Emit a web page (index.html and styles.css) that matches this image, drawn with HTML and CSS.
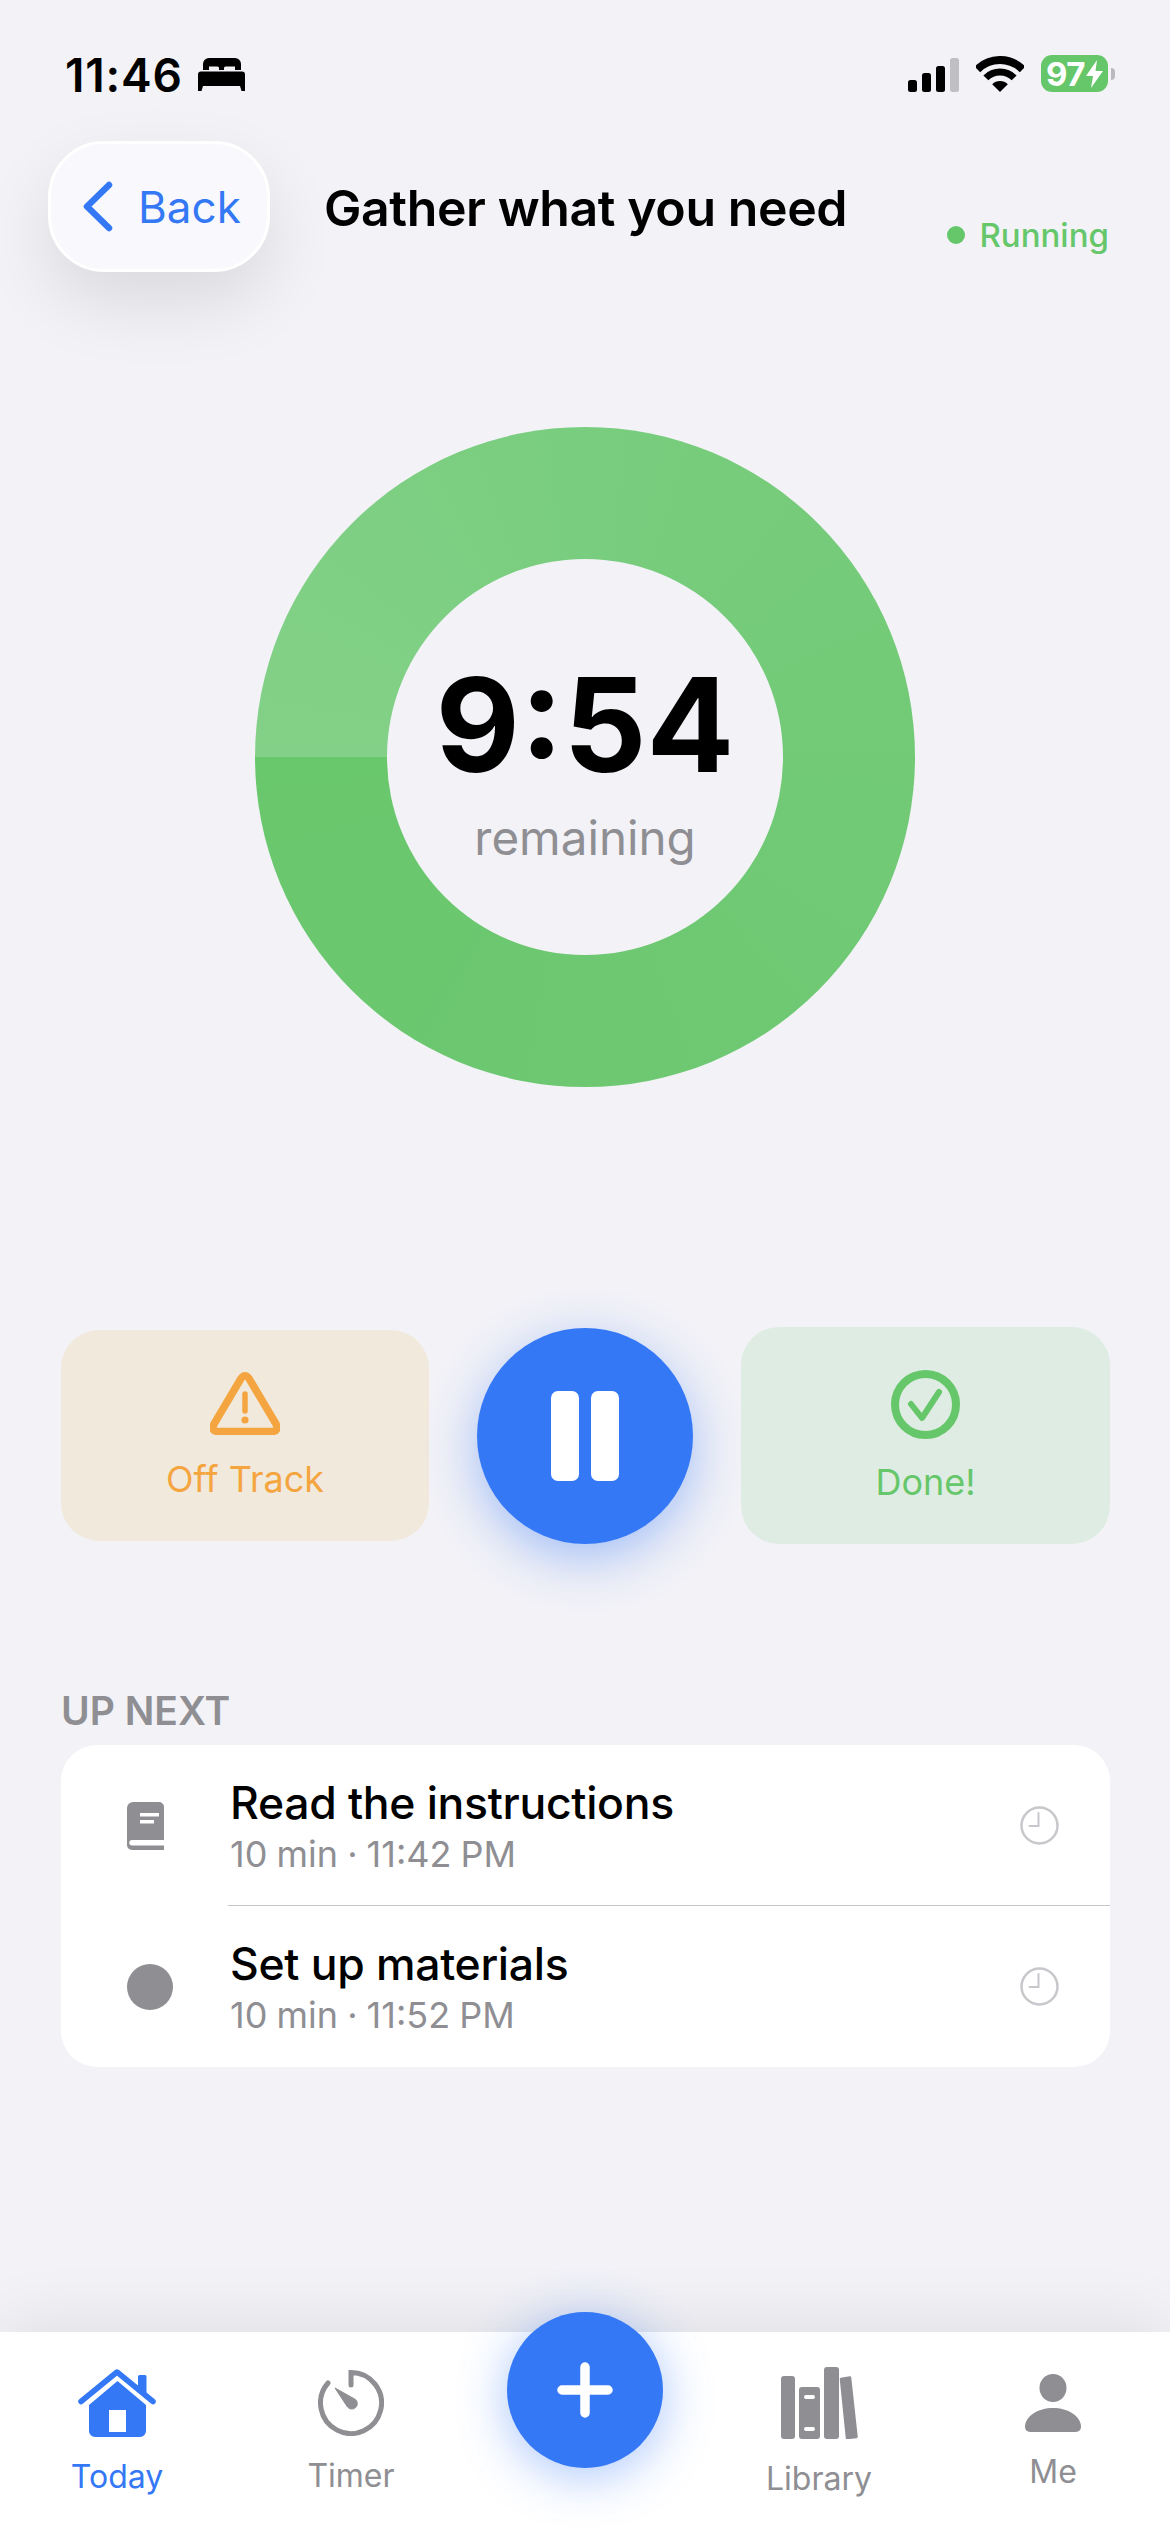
FILE: index.html
```html
<!DOCTYPE html>
<html lang="en">
<head>
  <meta charset="UTF-8">
  <title>Gather what you need</title>
  <link rel="stylesheet" href="styles.css">
</head>
<body>
  <div class="app">
    <div class="statusbar">
      <div class="clock-group">
        <span class="status-time">11:46</span>
        <svg class="bed" width="47" height="33" viewBox="0 0 47 33">
          <path fill-rule="evenodd" d="M11 0H37a6 6 0 0 1 6 6V12H5V6a6 6 0 0 1 6-6ZM11 8.500V12H21V10a1.500 1.500 0 0 0-1.500-1.500ZM27.500 8.500a1.500 1.500 0 0 0-1.500 1.500V12H37V8.500Z"/>
          <path d="M3 13.500H44a3 3 0 0 1 3 3V33H43.500L42 28H5L3.500 33H0V16.500a3 3 0 0 1 3-3Z"/>
        </svg>
      </div>
      <div class="status-icons">
        <svg width="51" height="34" viewBox="0 0 51 34">
          <rect x="0" y="22" width="9" height="12" rx="2.500"/>
          <rect x="14" y="15" width="9" height="19" rx="2.500"/>
          <rect x="28" y="8" width="9" height="26" rx="2.500"/>
          <rect x="42" y="0" width="9" height="34" rx="2.500" fill="#bfbfc4"/>
        </svg>
        <svg class="wifi" width="48" height="36" viewBox="0 0 48 36">
          <path d="M1.370 13.370A32 32 0 0 1 46.630 13.370" fill="none" stroke="#000" stroke-width="8"/>
          <path d="M9.860 21.860A20 20 0 0 1 38.140 21.860" fill="none" stroke="#000" stroke-width="7"/>
          <path d="M24 36L16.200 28.200A11 11 0 0 1 31.800 28.200Z"/>
        </svg>
        <div class="battery">
          <div class="battery-body">
            <span>97</span>
            <svg width="17" height="28" viewBox="0 0 17 28"><path d="M11 0L0 16H7L5 28L17 11H9.500Z" fill="#fff"/></svg>
          </div>
          <div class="battery-nub"></div>
        </div>
      </div>
    </div>

    <header class="topbar">
      <button class="back-btn">
        <svg width="30" height="51" viewBox="0 0 30 51"><path d="M26 4L4 25.500L26 47" fill="none" stroke="#3478f6" stroke-width="6.500" stroke-linecap="round" stroke-linejoin="round"/></svg>
        <span>Back</span>
      </button>
      <h1 class="title">Gather what you need</h1>
      <div class="run-state"><span class="run-dot"></span>Running</div>
    </header>

    <div class="ring">
      <div class="ring-hole">
        <div class="time-left">9:54</div>
        <div class="time-label">remaining</div>
      </div>
    </div>

    <div class="actions">
      <button class="action action-warn">
        <svg width="70" height="63" viewBox="0 0 70 63">
          <path d="M31 6.500Q35 1 39 6.500L66 52Q69 59.500 62 59.500H8Q1 59.500 4 52Z" fill="none" stroke="#f4a53f" stroke-width="7.500" stroke-linejoin="round"/>
          <path d="M35 22V39" stroke="#f4a53f" stroke-width="5.500" stroke-linecap="round"/>
          <circle cx="35" cy="48" r="3.600" fill="#f4a53f"/>
        </svg>
        <span>Off Track</span>
      </button>
      <button class="pause-btn">
        <span class="pause-bar"></span>
        <span class="pause-bar"></span>
      </button>
      <button class="action action-done">
        <svg width="69" height="69" viewBox="0 0 69 69">
          <circle cx="34.500" cy="34.500" r="30.500" fill="none" stroke="#66c76a" stroke-width="8"/>
          <path d="M20 34L31 48L48 22" fill="none" stroke="#66c76a" stroke-width="6" stroke-linecap="round" stroke-linejoin="round"/>
        </svg>
        <span>Done!</span>
      </button>
    </div>

    <section class="upnext">
      <h2 class="section-label">UP NEXT</h2>
      <ul class="task-list">
        <li class="task">
          <div class="task-icon">
            <svg width="37" height="48" viewBox="0 0 37 48">
              <path fill-rule="evenodd" d="M6 0H32a5 5 0 0 1 5 5V38H5a2.500 2.500 0 0 0 0 5.500H37V48H5a5 5 0 0 1-5-5V6a6 6 0 0 1 6-6ZM13 11V14.500H32V11ZM13 18V21.500H27V18Z" fill="#8e8e93"/>
            </svg>
          </div>
          <div class="task-body">
            <div class="task-text">
              <div class="task-name">Read the instructions</div>
              <div class="task-meta">10 min · 11:42 PM</div>
            </div>
            <svg class="task-clock" width="39" height="39" viewBox="0 0 39 39">
              <circle cx="19.500" cy="19.500" r="18" fill="none" stroke="#c8c8cc" stroke-width="2.500"/>
              <path d="M18.500 7V20H9.500" fill="none" stroke="#c8c8cc" stroke-width="2" stroke-linecap="round"/>
            </svg>
          </div>
        </li>
        <li class="task">
          <div class="task-icon"><span class="task-dot"></span></div>
          <div class="task-body">
            <div class="task-text">
              <div class="task-name">Set up materials</div>
              <div class="task-meta">10 min · 11:52 PM</div>
            </div>
            <svg class="task-clock" width="39" height="39" viewBox="0 0 39 39">
              <circle cx="19.500" cy="19.500" r="18" fill="none" stroke="#c8c8cc" stroke-width="2.500"/>
              <path d="M18.500 7V20H9.500" fill="none" stroke="#c8c8cc" stroke-width="2" stroke-linecap="round"/>
            </svg>
          </div>
        </li>
      </ul>
    </section>

    <nav class="tabbar">
      <div class="tab tab-active">
        <svg width="78" height="68" viewBox="0 0 78 68">
          <path d="M60 7.500a1.500 1.500 0 0 1 1.500-1.500H67a1.500 1.500 0 0 1 1.500 1.500V24L60 18Z" fill="#3478f6"/>
          <path d="M3 32.500L39 3L75 32.500" fill="none" stroke="#3478f6" stroke-width="5.500" stroke-linecap="round" stroke-linejoin="round"/>
          <path fill-rule="evenodd" d="M39.500 12L68 36V62a6 6 0 0 1-6 6H17a6 6 0 0 1-6-6V36ZM31 41V63H48V41Z" fill="#3478f6"/>
        </svg>
        <span>Today</span>
      </div>
      <div class="tab">
        <svg width="66" height="66" viewBox="0 0 66 66">
          <path d="M33 15V2.500A30.500 30.500 0 1 1 10 13" fill="none" stroke="#8e8e93" stroke-width="5" stroke-linecap="round"/>
          <path d="M17 18L37.500 29.500A5.500 5.500 0 1 1 29.500 37Z" fill="#8e8e93" stroke="#8e8e93" stroke-width="1" stroke-linejoin="round"/>
        </svg>
        <span>Timer</span>
      </div>
      <div class="tab"></div>
      <div class="tab">
        <svg width="77" height="72" viewBox="0 0 77 72">
          <rect x="0" y="9" width="14" height="63" rx="3" fill="#8e8e93"/>
          <path fill-rule="evenodd" d="M21 20H36a3 3 0 0 1 3 3V69a3 3 0 0 1-3 3H21a3 3 0 0 1-3-3V23a3 3 0 0 1 3-3ZM25 28a2 2 0 0 0 0 4H32a2 2 0 0 0 0-4ZM25 60a2 2 0 0 0 0 4H32a2 2 0 0 0 0-4Z" fill="#8e8e93"/>
          <rect x="43" y="0" width="15" height="72" rx="3" fill="#8e8e93"/>
          <path d="M60 12L69 10.500L75.500 70L66 71Z" fill="#8e8e93" stroke="#8e8e93" stroke-width="2.500" stroke-linejoin="round"/>
        </svg>
        <span>Library</span>
      </div>
      <div class="tab">
        <svg width="56" height="58" viewBox="0 0 56 58">
          <ellipse cx="28" cy="14" rx="13.500" ry="14" fill="#8e8e93"/>
          <path d="M0 53C0 42 13 34 28 34C43 34 56 42 56 53a5 5 0 0 1-5 5H5a5 5 0 0 1-5-5Z" fill="#8e8e93"/>
        </svg>
        <span>Me</span>
      </div>
      <button class="fab">
        <svg width="56" height="56" viewBox="0 0 56 56"><path d="M28 5V51M5 28H51" stroke="#fff" stroke-width="9.500" stroke-linecap="round"/></svg>
      </button>
    </nav>
  </div>
</body>
</html>
```
FILE: styles.css
```css
* {
  box-sizing: border-box;
}

body {
  margin: 0;
  background: #f2f2f7;
  font-family: Inter, "Noto Sans", sans-serif;
  color: #000;
}

button {
  border: none;
  padding: 0;
  font-family: inherit;
}

.app {
  height: 2532px;
  display: flex;
  flex-direction: column;
  overflow: hidden;
}

/* status bar */
.statusbar {
  height: 100px;
  padding: 50px 55px 0 65px;
  display: flex;
  justify-content: space-between;
  align-items: flex-start;
}

.clock-group {
  display: flex;
  align-items: center;
  gap: 15px;
  height: 50px;
}

.status-time {
  font-size: 46px;
  font-weight: 600;
  line-height: 50px;
  letter-spacing: 0.8px;
}

.bed {
  margin-top: -2px;
}

.status-icons {
  display: flex;
  align-items: flex-end;
  height: 42px;
}

.wifi {
  margin-left: 17px;
}

.battery {
  display: flex;
  align-items: center;
  margin-left: 17px;
}

.battery-body {
  width: 67px;
  height: 37px;
  border-radius: 11px;
  background: #66c76a;
  color: #fff;
  font-size: 33px;
  font-weight: 700;
  display: flex;
  align-items: center;
  justify-content: center;
  gap: 1px;
  letter-spacing: -0.5px;
}

.battery-nub {
  width: 4px;
  height: 12px;
  margin-left: 3px;
  background: #b9b9be;
  border-radius: 0 4px 4px 0;
}

/* header */
.topbar {
  margin-top: 41px;
  padding: 0 61px 0 48px;
  display: flex;
  align-items: center;
}

.back-btn {
  width: 222px;
  height: 131px;
  padding-left: 32px;
  display: flex;
  align-items: center;
  gap: 25px;
  border: 3px solid #fff;
  border-radius: 56px;
  background: #f9f9fd;
  color: #3478f6;
  font-size: 44px;
  box-shadow: 0 30px 70px rgba(0, 0, 0, 0.1);
}

.title {
  margin: 2px 0 0 54px;
  font-size: 50px;
  font-weight: 600;
  line-height: 60px;
  letter-spacing: -0.4px;
  white-space: nowrap;
}

.run-state {
  margin: 56px 0 0 auto;
  display: flex;
  align-items: center;
  gap: 14px;
  color: #66c76a;
  font-size: 33px;
  font-weight: 500;
  line-height: 40px;
}

.run-dot {
  width: 18px;
  height: 18px;
  border-radius: 50%;
  background: #66c76a;
}

/* timer ring */
.ring {
  width: 660px;
  height: 660px;
  margin: 155px auto 0;
  border-radius: 50%;
  background: conic-gradient(from 270deg, #83d188, #79cd7e 25%, #72ca76 50%, #6dc871 75%, #69c76c);
  display: flex;
  align-items: center;
  justify-content: center;
}

.ring-hole {
  width: 396px;
  height: 396px;
  border-radius: 50%;
  background: #f2f2f7;
  display: flex;
  flex-direction: column;
  align-items: center;
}

.time-left {
  margin-top: 96px;
  font-size: 130px;
  font-weight: 700;
  line-height: 140px;
}

.time-label {
  margin-top: 13px;
  color: #8e8e93;
  font-size: 47.500px;
  line-height: 60px;
}

/* actions */
.actions {
  margin-top: 240px;
  padding: 0 60px 0 61px;
  display: flex;
  align-items: center;
  justify-content: space-between;
}

.action {
  display: flex;
  flex-direction: column;
  align-items: center;
  border-radius: 38px;
  font-size: 36px;
  line-height: 44px;
}

.action-warn {
  width: 368px;
  height: 211px;
  padding-top: 42px;
  gap: 22px;
  background: #f2e9dd;
  color: #f4a53f;
}

.action-done {
  width: 369px;
  height: 217px;
  padding-top: 43px;
  gap: 21px;
  background: #dfece3;
  color: #66c76a;
}

.pause-btn {
  width: 216px;
  height: 216px;
  border-radius: 50%;
  background: #3478f6;
  display: flex;
  align-items: center;
  justify-content: center;
  gap: 12px;
  box-shadow: 0 14px 50px rgba(52, 120, 246, 0.42);
}

.pause-bar {
  width: 28px;
  height: 90px;
  border-radius: 7px;
  background: #fff;
}

/* up next */
.upnext {
  margin-top: 145px;
  padding: 0 60px 0 61px;
}

.section-label {
  margin: 0 0 12px 0;
  color: #8e8e93;
  font-size: 39px;
  font-weight: 600;
  line-height: 44px;
}

.task-list {
  margin: 0;
  padding: 0;
  list-style: none;
  background: #fff;
  border-radius: 36px;
}

.task {
  display: flex;
  align-items: stretch;
}

.task-icon {
  width: 167px;
  padding-left: 66px;
  display: flex;
  align-items: center;
}

.task-dot {
  width: 46px;
  height: 46px;
  border-radius: 50%;
  background: #8e8e93;
}

.task-body {
  flex: 1;
  height: 161px;
  padding: 0 51px 0 2px;
  display: flex;
  align-items: center;
  justify-content: space-between;
  border-bottom: 1px solid #c6c6c8;
}

.task:last-child .task-body {
  border-bottom: none;
}

.task-text {
  padding-top: 1px;
}

.task-name {
  font-size: 44.500px;
  font-weight: 500;
  line-height: 52px;
  letter-spacing: -0.3px;
}

.task-meta {
  margin-top: 4px;
  color: #8e8e93;
  font-size: 36px;
  line-height: 42px;
  word-spacing: -1px;
}

/* tab bar */
.tabbar {
  position: relative;
  margin-top: auto;
  height: 200px;
  display: grid;
  grid-template-columns: repeat(5, 1fr);
  background: #fff;
  box-shadow: 0 -10px 60px rgba(0, 0, 0, 0.08);
}

.tab {
  display: flex;
  flex-direction: column;
  align-items: center;
  justify-content: center;
  gap: 22px;
  color: #8e8e93;
  font-size: 32px;
  line-height: 36px;
}

.tab-active {
  color: #3478f6;
}

.fab {
  position: absolute;
  top: -20px;
  left: 507px;
  width: 156px;
  height: 156px;
  border-radius: 50%;
  background: #3478f6;
  display: flex;
  align-items: center;
  justify-content: center;
  box-shadow: 0 8px 50px rgba(52, 120, 246, 0.42);
}
```
